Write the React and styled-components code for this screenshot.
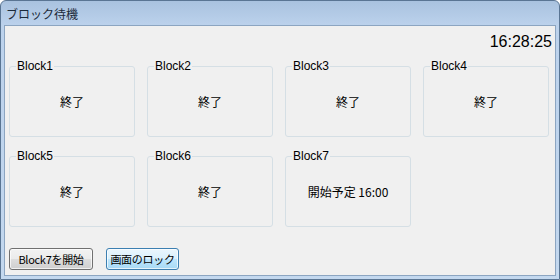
import styled, { createGlobalStyle } from "styled-components"

const Global = createGlobalStyle`
  html, body {
    margin: 0;
    padding: 0;
    background: #ffffff;
  }
  * {
    box-sizing: border-box;
  }
`

const Window = styled.div`
  width: 560px;
  height: 280px;
  display: flex;
  flex-direction: column;
  background: linear-gradient(to bottom, #a9c2df 0px, #bcd2ec 25px, #c3d8ef 100%);
  border: 1px solid #5a7593;
  border-radius: 6px 6px 0 0;
  padding: 0 3px 3px 3px;
  font-family: "Liberation Sans", "Noto Sans CJK JP", sans-serif;
`

const TitleBar = styled.div`
  height: 24px;
  display: flex;
  align-items: center;
  padding-left: 2px;
  font-family: "Noto Sans CJK JP", sans-serif;
  font-size: 12px;
  color: #1b2a3a;
`

const Client = styled.div`
  flex: 1;
  display: flex;
  flex-direction: column;
  background: #f0f0f0;
  border: 1px solid #8ca5c1;
  padding: 0 3px 5px 4px;
`

const Clock = styled.div`
  text-align: right;
  font-size: 16px;
  line-height: 20px;
  margin-top: 6px;
  color: #000;
`

const Grid = styled.div`
  display: grid;
  grid-template-columns: repeat(4, 126px);
  column-gap: 12px;
  row-gap: 12px;
  margin-top: 7px;
`

const Group = styled.fieldset`
  margin: 0;
  height: 78px;
  padding: 0 0 7px;
  border: 1px solid #d5dfe5;
  border-radius: 3px;
  display: flex;
  align-items: center;
  justify-content: center;
`

const Legend = styled.legend`
  font-size: 12px;
  line-height: 14px;
  padding: 0 1px;
  margin-left: 6px;
  color: #000;
`

const Status = styled.div`
  font-size: 12px;
  color: #000;
  width: 100%;
  text-align: center;
  font-family: "Noto Sans CJK JP", sans-serif;
`

const Buttons = styled.div`
  margin-top: auto;
  display: flex;
  gap: 13px;
`

const Button = styled.button`
  width: ${(p) => p.$width}px;
  height: 22px;
  padding: 0;
  font-family: "Noto Sans CJK JP", sans-serif;
  font-size: 11px;
  letter-spacing: -0.3px;
  line-height: 18px;
  color: #000;
  border-radius: 3px;
  border: 1px solid ${(p) => (p.$focused ? "#3c7fb1" : "#707070")};
  background: ${(p) =>
    p.$focused
      ? "linear-gradient(to bottom, #eaf6fd 0%, #d9f0fc 50%, #bee6fd 51%, #a7d9f5 100%)"
      : "linear-gradient(to bottom, #f2f2f2 0%, #ebebeb 50%, #dddddd 51%, #cfcfcf 100%)"};
  box-shadow: inset 0 0 0 1px rgba(255, 255, 255, 0.7);
`

const blocks = [
  { name: "Block1", status: "終了" },
  { name: "Block2", status: "終了" },
  { name: "Block3", status: "終了" },
  { name: "Block4", status: "終了" },
  { name: "Block5", status: "終了" },
  { name: "Block6", status: "終了" },
  { name: "Block7", status: "開始予定 16:00" },
]

const App = () => {
  return (
    <>
      <Global />
      <Window>
        <TitleBar>ブロック待機</TitleBar>
        <Client>
          <Clock>16:28:25</Clock>
          <Grid>
            {blocks.map((b) => (
              <Group key={b.name}>
                <Legend>{b.name}</Legend>
                <Status>{b.status}</Status>
              </Group>
            ))}
          </Grid>
          <Buttons>
            <Button $width={84}>Block7を開始</Button>
            <Button $width={73} $focused>
              画面のロック
            </Button>
          </Buttons>
        </Client>
      </Window>
    </>
  )
}

export default App
